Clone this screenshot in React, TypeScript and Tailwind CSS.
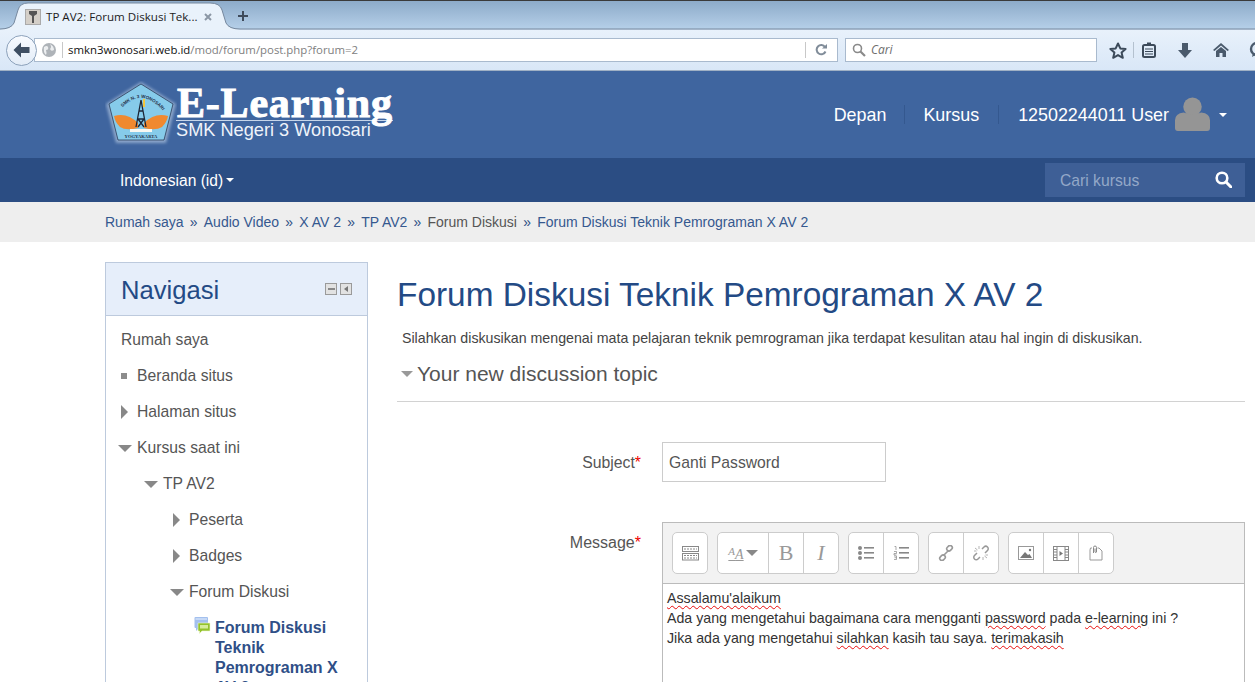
import React from "react";

function Logo() {
  return (
    <svg width="72" height="66" viewBox="0 0 72 66" className="shrink-0">
      <defs>
        <filter id="gl" x="-20%" y="-20%" width="140%" height="140%"><feGaussianBlur stdDeviation="1.6" /></filter>
        <path id="arc" d="M14 30 Q36 4 58 30" />
      </defs>
      <polygon points="36,1 71,23 61,62 11,62 1,23" fill="#dbe9f7" opacity="0.5" filter="url(#gl)" />
      <polygon points="36,3 68,23 59,59 13,59 4,23" fill="#86cbea" stroke="#2a3a58" strokeWidth="0.8" />
      <text fontSize="4.6" fontWeight="700" fill="#26324a" fontFamily='"Liberation Sans", sans-serif'>
        <textPath href="#arc" startOffset="5">SMK N. 3 WONOSARI</textPath>
      </text>
      <path d="M9 35 Q22 31 33 42 L33 47 Q21 50 15 46 Q10 41 9 35Z" fill="#f0892f" />
      <path d="M63 35 Q50 31 39 42 L39 47 Q51 50 57 46 Q62 41 63 35Z" fill="#f0892f" />
      <path d="M36 19 L31 46 M36 19 L41 46 M33.5 30 H38.5 M32.5 38 H39.5 M33 38 L39 46 M39 38 L33 46" stroke="#1c2636" strokeWidth="1.3" fill="none" />
      <rect x="38" y="18" width="2" height="8" fill="#f4c63c" />
      <rect x="25" y="48" width="22" height="3" fill="#f8f8f2" />
      <text x="36" y="57" textAnchor="middle" fontSize="4.6" fontWeight="700" fill="#26324a" fontFamily='"Liberation Serif", serif'>YOGYAKARTA</text>
    </svg>
  );
}

function NavRow({ indent, icon, children }: { indent: string; icon: "square" | "right" | "down" | "none"; children: React.ReactNode }) {
  return (
    <div className={`h-9 flex items-center text-[15.7px] text-[#555] ${indent}`}>
      {icon === "square" && <span className="w-[6px] h-[6px] bg-[#8c8c8c] mr-[10px]" />}
      {icon === "right" && <span className="w-0 h-0 border-y-[7px] border-y-transparent border-l-[7px] border-l-[#888] mr-[9px]" />}
      {icon === "down" && <span className="w-0 h-0 border-x-[7px] border-x-transparent border-t-[7px] border-t-[#888] mr-[5px] -ml-[3px]" />}
      <span>{children}</span>
    </div>
  );
}

const Tb = ({ last, w, children }: { last?: boolean; w?: string; children: React.ReactNode }) => (
  <div className={`${w ?? (last ? "w-[34px]" : "w-[35px]")} h-[40px] flex items-center justify-center ${last ? "" : "border-r border-[#ccc]"}`}>{children}</div>
);
const TbGroup = ({ children }: { children: React.ReactNode }) => (
  <div className="flex bg-white border border-[#ccc] rounded-[5px] h-[42px]">{children}</div>
);
const Sp = ({ children }: { children: React.ReactNode }) => (
  <span className="underline decoration-wavy decoration-[#e80c0c] decoration-1 underline-offset-2">{children}</span>
);

const crumbs = ["Rumah saya", "Audio Video", "X AV 2", "TP AV2", "Forum Diskusi", "Forum Diskusi Teknik Pemrograman X AV 2"];

export default function App() {
  return (
    <div className="w-[1255px] h-[682px] overflow-hidden bg-white flex flex-col" style={{ fontFamily: '"Liberation Sans", Arial, sans-serif' }}>
      {/* tab strip */}
      <div className="h-[30px] shrink-0 border-t border-t-[#3a3a3a] bg-gradient-to-b from-[#8dabc9] to-[#b7d1ea] flex items-end relative">
        <svg width="1255" height="29" viewBox="0 0 1255 29" className="absolute left-0 top-0">
          <path d="M0 28.5 Q11 28 14 22 L18 9 Q20 2 28 2 H210 Q220 2 222 9 L226 22 Q229 28 240 28.5 H1255 V29 H0Z" fill="#e9f2fb" />
          <path d="M0 28 Q11 28 14 22 L18 9 Q20 2 28 2 H210 Q220 2 222 9 L226 22 Q229 28 240 28 H1255" fill="none" stroke="#76889e" />
        </svg>
        <div className="relative w-[245px] h-[27px] flex items-center pl-[25px]">
          <span className="w-[16px] h-[16px] bg-[#d4cfc8] border border-[#aaa] flex items-center justify-center mr-[5px]">
            <svg width="10" height="14" viewBox="0 0 10 14"><path d="M1 1 H9 V4 L6 6 V13 H4 V6 L1 4Z" fill="#555" /></svg>
          </span>
          <span className="text-[11.6px] text-[#1c1c1c] w-[158px] whitespace-nowrap" style={{ fontFamily: '"Open Sans", sans-serif' }}>TP AV2: Forum Diskusi Tek...</span>
          <svg width="8" height="8" viewBox="0 0 8 8"><path d="M1 1 L7 7 M7 1 L1 7" stroke="#8b97a5" strokeWidth="2" /></svg>
        </div>
        <svg width="12" height="12" viewBox="0 0 12 12" className="relative -ml-[8px] mb-[8px]"><path d="M6 1 V11 M1 6 H11" stroke="#3f4b5b" strokeWidth="2" /></svg>
      </div>
      {/* toolbar */}
      <div className="h-[41px] shrink-0 bg-gradient-to-b from-[#e8f1fb] to-[#d9e7f7] border-b border-[#9fb0c4] flex items-center pl-[6px] overflow-hidden">
        <div className="w-[31px] h-[31px] shrink-0 rounded-full bg-gradient-to-b from-[#f8fbff] to-[#e3ecf7] border border-[#8da2bb] flex items-center justify-center relative z-10 -mr-[3px]">
          <svg width="19" height="16" viewBox="0 0 19 16"><path d="M9 0.5 L1.5 8 L9 15.5 V11 H17.5 V5 H9Z" fill="#3f4f63" /></svg>
        </div>
        <div className="w-[804px] shrink-0 h-[24px] bg-white border border-[#a9bace] flex items-center pl-[6px] pr-[10px]">
          <svg width="16" height="16" viewBox="0 0 16 16" className="shrink-0"><circle cx="8" cy="8" r="7" fill="#aeb3b8" /><path d="M3 5 Q6 3 7 5 Q8 8 5 8 Q6 11 5 13 Q2 10 3 5Z M9 2 Q13 4 13 8 Q10 10 9 7 Q11 5 9 2Z" fill="#eceef0" /></svg>
          <span className="w-px h-[16px] bg-[#c8c8c8] mx-[5px]" />
          <span className="text-[11.4px] text-[#111] whitespace-nowrap flex-1" style={{ fontFamily: '"Open Sans", sans-serif' }}>smkn3wonosari.web.id<span className="text-[#808080]">/mod/forum/post.php?forum=2</span></span>
          <span className="w-px h-[16px] bg-[#c8c8c8] mr-[9px]" />
          <svg width="12" height="12" viewBox="0 0 12 12" className="shrink-0"><path d="M10 3 A4.6 4.6 0 1 0 10.5 7.5" fill="none" stroke="#808c99" strokeWidth="2" /><path d="M7 4.5 H12 V0Z" fill="#808c99" /></svg>
        </div>
        <div className="w-[252px] shrink-0 h-[24px] ml-[7px] bg-white border border-[#a9bace] flex items-center pl-[6px]">
          <svg width="14" height="14" viewBox="0 0 14 14"><circle cx="5.5" cy="5.5" r="4" fill="none" stroke="#8a8a8a" strokeWidth="1.6" /><path d="M8.5 8.5 L13 13" stroke="#8a8a8a" strokeWidth="2.2" /></svg>
          <span className="text-[12px] italic text-[#6d6d6d] ml-[5px]" style={{ fontFamily: '"Open Sans", sans-serif' }}>Cari</span>
        </div>
        <svg width="18" height="17" viewBox="0 0 18 17" className="ml-[12px] shrink-0"><path d="M9 1.5 L11.3 6.4 L16.6 7 L12.6 10.6 L13.8 15.8 L9 13.1 L4.2 15.8 L5.4 10.6 L1.4 7 L6.7 6.4Z" fill="none" stroke="#3c4a5a" strokeWidth="2" strokeLinejoin="round" /></svg>
        <span className="w-px h-[16px] shrink-0 bg-[#b4c1cf] ml-[6px] mr-[8px]" />
        <svg width="14" height="16" viewBox="0 0 14 16" className="shrink-0"><rect x="1" y="3" width="12" height="12" rx="1.5" fill="none" stroke="#3c4a5a" strokeWidth="2" /><rect x="5" y="0.5" width="4" height="3" fill="#3c4a5a" /><path d="M3 7 H11 M3 9.5 H11 M3 12 H11" stroke="#3c4a5a" strokeWidth="1.2" /></svg>
        <svg width="14" height="15" viewBox="0 0 14 15" className="ml-[22px] shrink-0"><path d="M4 0 H10 V7 H14 L7 15 L0 7 H4Z" fill="#4a5a6c" /></svg>
        <svg width="16" height="14" viewBox="0 0 16 14" className="ml-[21px] shrink-0"><path d="M8 0 L16 7 L14.5 8 L8 2.5 L1.5 8 L0 7Z" fill="#4a5a6c" /><path d="M3 8 L8 4 L13 8 V14 H9.5 V10 H6.5 V14 H3Z" fill="#4a5a6c" /></svg>
        <svg width="14" height="16" viewBox="0 0 14 16" className="ml-[20px] shrink-0"><circle cx="8" cy="7" r="6" fill="none" stroke="#4a5a6c" strokeWidth="2.4" /><path d="M4 11 L3 15 L8 12Z" fill="#4a5a6c" /></svg>
      </div>
      {/* header */}
      <div className="h-[87px] shrink-0 bg-[#3f659f] flex items-center pl-[105px] pr-[28px]">
        <div className="-mt-[1px]"><Logo /></div>
        <div className="ml-[-1px] -mt-[3px] flex flex-col text-white">
          <div className="text-[42px] leading-[33px] font-bold border-b border-[#c7d6ea] pl-[1px] tracking-[0.8px] whitespace-nowrap [-webkit-text-stroke:1px_white]" style={{ fontFamily: '"Liberation Serif", serif' }}>E-Learning</div>
          <div className="text-[18.2px] leading-[18px] whitespace-nowrap text-[#eef3fa]">SMK Negeri 3 Wonosari</div>
        </div>
        <div className="ml-auto flex items-center text-white text-[17.9px]">
          <span className="pt-[1px]">Depan</span>
          <span className="w-px h-[19px] bg-[#34588f] mx-[18px]" />
          <span className="pt-[1px]">Kursus</span>
          <span className="w-px h-[19px] bg-[#34588f] mx-[19px]" />
          <span className="pt-[1px]">12502244011 User</span>
          <svg width="35" height="35" viewBox="0 0 36 36" className="ml-[6px]"><circle cx="18" cy="10" r="9.5" fill="#959595" /><path d="M0 32 V24 Q0 17 9 16 Q18 20 27 16 Q36 17 36 24 V32 Q36 35 33 35 H3 Q0 35 0 32Z" fill="#959595" /></svg>
          <span className="ml-[9px] w-0 h-0 border-x-[4px] border-x-transparent border-t-[4px] border-t-white" />
        </div>
      </div>
      {/* nav bar */}
      <div className="h-[44px] shrink-0 bg-[#2b4d83] flex items-center pl-[120px] pr-[10px]">
        <span className="text-[15.6px] text-white pt-[2px]">Indonesian (id)</span>
        <span className="ml-[3px] mb-[1px] w-0 h-0 border-x-[4px] border-x-transparent border-t-[4px] border-t-white" />
        <div className="ml-auto w-[200px] h-[34px] -mt-[1px] bg-[#3e5f96] flex items-center pl-[15px] pr-[13px]">
          <span className="text-[15.7px] text-[#93a8c8] flex-1 pt-[2px]">Cari kursus</span>
          <svg width="17" height="17" viewBox="0 0 17 17"><circle cx="7" cy="7" r="5.3" fill="none" stroke="#fff" strokeWidth="2.6" /><path d="M11 11 L16 16" stroke="#fff" strokeWidth="3" strokeLinecap="round" /></svg>
        </div>
      </div>
      {/* breadcrumb */}
      <div className="h-[40px] shrink-0 bg-[#eeeeee] flex items-center pl-[105px] text-[14px] text-[#35588f] whitespace-nowrap">
        {crumbs.map((c, i) => (
          <React.Fragment key={c + i}>
            {i > 0 && <span className="text-[#2b4d83] mx-[6.2px] text-[14px]">»</span>}
            <span className={i === 4 ? "text-[#555]" : ""}>{c}</span>
          </React.Fragment>
        ))}
      </div>
      {/* body */}
      <div className="flex flex-1 pl-[105px] pt-[20px] pr-[10px] overflow-hidden">
        <div className="w-[263px] shrink-0 border border-[#bdcadd] border-b-0 h-[440px]">
          <div className="h-[53px] bg-[#e6eefa] border-b border-[#bdcadd] flex items-center pl-[15px] pr-[15px]">
            <span className="text-[25.6px] text-[#234a85] flex-1 pt-[2px]">Navigasi</span>
            <span className="w-[12px] h-[12px] border border-[#9a9a9a] bg-[#e2e2e2] flex items-center justify-center mr-[3px]"><span className="w-[7px] h-[2px] bg-[#888]" /></span>
            <span className="w-[12px] h-[12px] border border-[#9a9a9a] bg-[#e2e2e2] flex items-center justify-center"><span className="w-0 h-0 border-y-[3px] border-y-transparent border-r-[4px] border-r-[#777]" /></span>
          </div>
          <div className="pt-[6px]">
            <div className="h-9 flex items-center text-[15.6px] text-[#555] pl-[15px]">Rumah saya</div>
            <NavRow indent="pl-[15px]" icon="square">Beranda situs</NavRow>
            <NavRow indent="pl-[15px]" icon="right">Halaman situs</NavRow>
            <NavRow indent="pl-[15px]" icon="down">Kursus saat ini</NavRow>
            <NavRow indent="pl-[41px]" icon="down">TP AV2</NavRow>
            <NavRow indent="pl-[67px]" icon="right">Peserta</NavRow>
            <NavRow indent="pl-[67px]" icon="right">Badges</NavRow>
            <NavRow indent="pl-[67px]" icon="down">Forum Diskusi</NavRow>
            <div className="flex pl-[88px] pr-[20px] pt-[8px]">
              <svg width="17" height="17" viewBox="0 0 17 17" className="shrink-0 mt-[-1px] mr-[4px]">
                <path d="M0.5 1 Q0.5 0 1.5 0 H13 Q14 0 14 1 V10 Q14 11 13 11 H5 L2 14 V11 H1.5 Q0.5 11 0.5 10Z" fill="#a3c0ee" />
                <path d="M1.5 1 H13 V3 H1.5Z" fill="#c6d9f6" />
                <path d="M4 6 H16 V14 H8 L5.5 16.5 V14 H4Z" fill="#93c22b" stroke="#eef7d4" strokeWidth="0.6" />
                <rect x="6" y="8" width="8" height="3.5" fill="#d6ec9a" />
              </svg>
              <span className="text-[16px] leading-[20px] font-bold text-[#2f4f87]">Forum Diskusi Teknik Pemrograman X AV 2</span>
            </div>
          </div>
        </div>
        <div className="flex-1 ml-[29px] min-w-0">
          <h1 className="text-[33.4px] leading-[40px] text-[#234a85] mt-[13px] whitespace-nowrap">Forum Diskusi Teknik Pemrograman X AV 2</h1>
          <p className="text-[14.2px] leading-[20px] text-[#444] ml-[5px] mt-[13px] whitespace-nowrap">Silahkan diskusikan mengenai mata pelajaran teknik pemrograman jika terdapat kesulitan atau hal ingin di diskusikan.</p>
          <div className="flex items-center mt-[14px] ml-[4px]">
            <span className="w-0 h-0 border-x-[6px] border-x-transparent border-t-[6px] border-t-[#999] mr-[4px]" />
            <span className="text-[21px] leading-[24px] text-[#555]">Your new discussion topic</span>
          </div>
          <div className="h-px bg-[#d2d2d2] mt-[15px]" />
          <div className="flex mt-[40px]">
            <div className="w-[265px] flex justify-end h-[40px] items-center pr-[21px] pt-[1px] text-[15.8px] text-[#555]">Subject<span className="text-[#e00]">*</span></div>
            <div className="w-[224px] h-[40px] border border-[#ccc] flex items-center pl-[6px] pt-[1px] text-[15.7px] text-[#555]">Ganti Password</div>
          </div>
          <div className="flex mt-[40px]">
            <div className="w-[265px] flex justify-end pt-[11px] pr-[21px] text-[16px] leading-[20px] text-[#555] h-[40px]">Message<span className="text-[#e00]">*</span></div>
            <div className="flex-1 border border-[#bbb] border-b-0">
              <div className="h-[61px] bg-[#f2f2f2] border-b border-[#bbb] flex items-center pl-[9px] gap-[9px]">
                <TbGroup>
                  <Tb last>
                    <svg width="17" height="16" viewBox="0 0 17 16"><g fill="none" stroke="#888"><rect x="0.5" y="1.5" width="16" height="5" /><rect x="0.5" y="8.5" width="16" height="6.5" /></g><path d="M2 4 H15 M2 10.5 H15 M2 13 H15" stroke="#888" strokeDasharray="2 1" /></svg>
                  </Tb>
                </TbGroup>
                <TbGroup>
                  <Tb w="w-[51px]">
                    <span className="flex items-center">
                      <span className="text-[#999] italic underline leading-none pt-[2px]" style={{ fontFamily: '"Liberation Serif", serif' }}><span className="text-[11px] align-top">A</span><span className="text-[14px]">A</span></span>
                      <span className="ml-[2px] w-0 h-0 border-x-[6px] border-x-transparent border-t-[6px] border-t-[#888]" />
                    </span>
                  </Tb>
                  <Tb><span className="text-[22px] text-[#999] leading-none" style={{ fontFamily: '"Liberation Serif", serif' }}>B</span></Tb>
                  <Tb last><span className="text-[22px] italic text-[#999] leading-none" style={{ fontFamily: '"Liberation Serif", serif' }}>I</span></Tb>
                </TbGroup>
                <TbGroup>
                  <Tb>
                    <svg width="16" height="14" viewBox="0 0 16 14"><g fill="#888"><circle cx="2" cy="2" r="2" /><circle cx="2" cy="7" r="2" /><circle cx="2" cy="12" r="2" /><rect x="6" y="1" width="10" height="1.6" /><rect x="6" y="6" width="10" height="1.6" /><rect x="6" y="11" width="10" height="1.6" /></g></svg>
                  </Tb>
                  <Tb last>
                    <svg width="16" height="14" viewBox="0 0 16 14"><g fill="#888"><rect x="6" y="1" width="10" height="1.6" /><rect x="6" y="6" width="10" height="1.6" /><rect x="6" y="11" width="10" height="1.6" /></g><path d="M1.5 0.5 H3 V4 M1 5.5 H3.5 V7.5 H1 V9 H3.5 M1 10 H3.5 V13.5 H1 M1.5 11.7 H3.5" fill="none" stroke="#888" strokeWidth="0.7" /></svg>
                  </Tb>
                </TbGroup>
                <TbGroup>
                  <Tb>
                    <svg width="16" height="16" viewBox="0 0 16 16"><g fill="none" stroke="#999" strokeWidth="1.6"><rect x="8.5" y="1" width="6" height="4.4" rx="2.2" transform="rotate(-45 11.5 3.2)" /><rect x="1.5" y="10.6" width="6" height="4.4" rx="2.2" transform="rotate(-45 4.5 12.8)" /><path d="M5.5 10.5 L10.5 5.5" /></g></svg>
                  </Tb>
                  <Tb last>
                    <svg width="16" height="16" viewBox="0 0 16 16"><g fill="none" stroke="#999" strokeWidth="1.5"><path d="M9 4 L11 2 A2.4 2.4 0 0 1 14.5 5.5 L12 8" /><path d="M7 12 L5 14 A2.4 2.4 0 0 1 1.5 10.5 L4 8" /></g><path d="M6 1 V4 M2 3 L4.5 5 M1 6 H3.5 M10 15 V12 M14 13 L11.5 11 M15 10 H12.5" stroke="#aaa" strokeWidth="0.9" /></svg>
                  </Tb>
                </TbGroup>
                <TbGroup>
                  <Tb>
                    <svg width="16" height="14" viewBox="0 0 16 14"><rect x="0.5" y="0.5" width="15" height="13" fill="#fff" stroke="#999" /><path d="M2 12 L7 6 L10 9 L11.5 8 L14 12Z" fill="#777" /><circle cx="12" cy="4" r="1.2" fill="#777" /></svg>
                  </Tb>
                  <Tb>
                    <svg width="16" height="15" viewBox="0 0 16 15"><rect x="0.5" y="0.5" width="15" height="14" fill="none" stroke="#888" /><path d="M4 0.5 V14.5 M12 0.5 V14.5" stroke="#888" /><path d="M1 3.5 H4 M1 6 H4 M1 9 H4 M1 11.5 H4 M12 3.5 H15 M12 6 H15 M12 9 H15 M12 11.5 H15" stroke="#888" /><path d="M6.5 5 L10 7.5 L6.5 10Z" fill="#777" /></svg>
                  </Tb>
                  <Tb last>
                    <svg width="14" height="16" viewBox="0 0 14 16"><path d="M1 5 V15 H13 V6 L10 3 H8.5 M3 3 H1.5 L1 5" fill="none" stroke="#999" /><path d="M4.5 8 V2.5 A1.5 1.5 0 0 1 7.5 2.5 V7 A0.8 0.8 0 0 1 6 7 V3.5" fill="none" stroke="#888" /></svg>
                  </Tb>
                </TbGroup>
              </div>
              <div className="px-[4px] pt-[4px] text-[14.2px] leading-[20px] text-[#333] whitespace-nowrap h-[120px]">
                <div><Sp>Assalamu'alaikum</Sp></div>
                <div>Ada yang mengetahui bagaimana cara mengganti <Sp>password</Sp> pada <Sp>e-learning</Sp> ini ?</div>
                <div>Jika ada yang mengetahui <Sp>silahkan</Sp> kasih tau saya. <Sp>terimakasih</Sp></div>
              </div>
            </div>
          </div>
        </div>
      </div>
    </div>
  );
}
